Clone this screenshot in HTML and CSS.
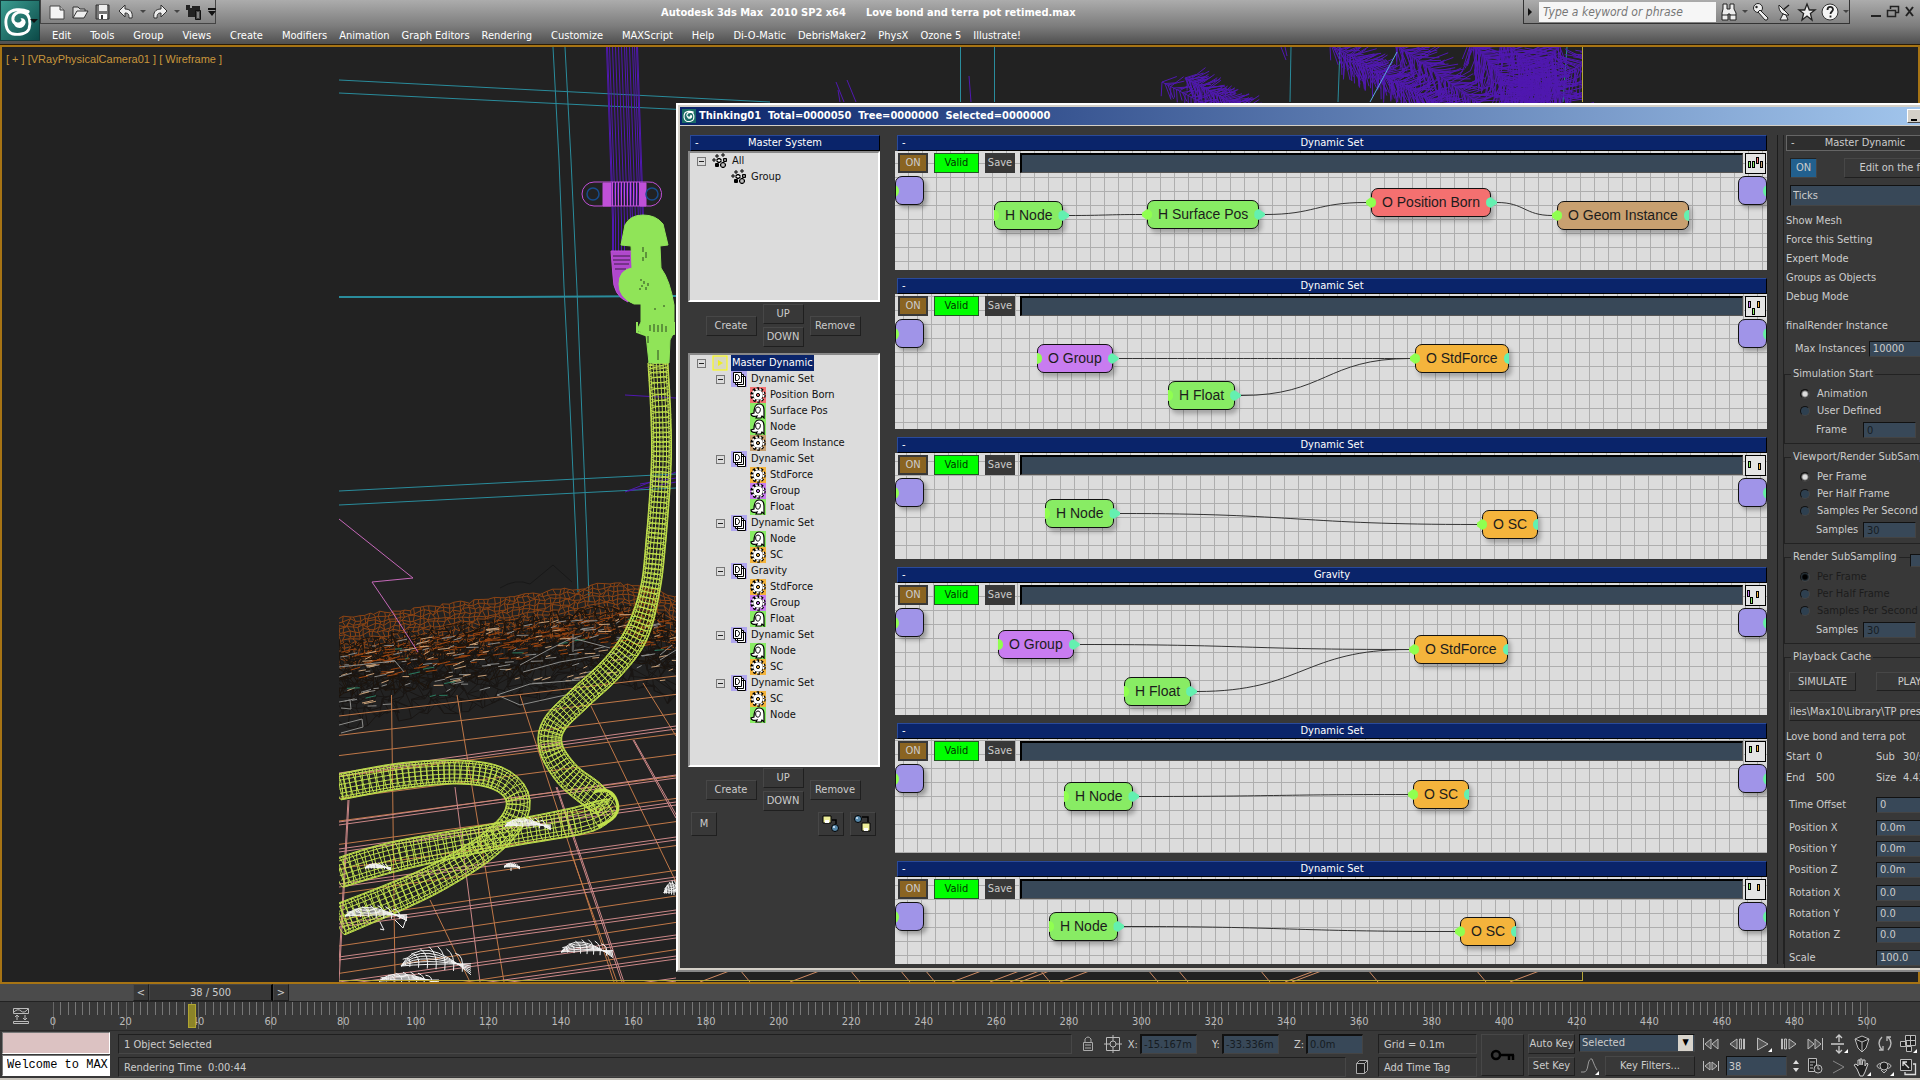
FILE: index.html
```html
<!DOCTYPE html>
<html lang="en">
<head>
    <meta charset="UTF-8">
    <meta name="viewport" content="width=device-width, initial-scale=1.0">
    <title>Autodesk 3ds Max 2010 SP2 x64</title>
    <link rel="stylesheet" href="styles.css">
</head>
<body>
    <!-- shared icons -->
    <svg class="defs" width="0" height="0">
        <symbol id="i-max" viewBox="0 0 40 40">
            <path d="M32 9C24 5 12 6 8 12c-4 7-3 20 5 23 8 2 18 0 20-6 2-7 1-17-6-19-8-2-14 3-13 9 1 5 8 6 11 2" fill="none" stroke="#fff" stroke-width="3.4" stroke-linecap="round"/>
            <path d="M15 20c-1 10 12 11 14 2 0-4-3-6-6-5 3 3 1 7-3 7-2 0-4-2-5-4z" fill="#fff"/>
        </symbol>
        <symbol id="i-particles" viewBox="0 0 16 16">
            <path d="M5 1v4M3 3h4M11 0v4M9 2h4M2 5v4M0 7h4" stroke="#000" fill="none"/>
            <path d="M7 5v5M4.500 7.500h5M13 5v4M11 7h4M11 9v6M8 12h6M5 10v4M3 12h4" stroke="#000" stroke-width="3" fill="none"/>
            <path d="M7 6v3M5.500 7.500h3M11 10v4M9 12h4M13 6v2" stroke="#fff" fill="none"/>
        </symbol>
        <symbol id="i-master" viewBox="0 0 16 16">
            <rect x="1" y="1" width="14" height="14" fill="#d8d8c0" stroke="#ff0"/>
            <path d="M6 5l5 3-5 3z" fill="#ee2"/>
        </symbol>
        <symbol id="i-set" viewBox="0 0 16 16">
            <rect width="16" height="16" fill="#b0a6ee"/>
            <path d="M6.500 5.500h8v10h-8zM4.500 3.500h8v10h-8z" fill="#fff" stroke="#000"/>
            <path d="M2.500 1.500h8v10h-8z" fill="#fff" stroke="#000"/>
            <path d="M4.500 3.500h2q2 1 2 3t-2 3h-2z" fill="none" stroke="#000"/>
        </symbol>
        <symbol id="i-gear" viewBox="0 0 16 16">
            <circle cx="8" cy="8" r="6.300" fill="none" stroke="#000" stroke-width="2.800" stroke-dasharray="2.400 1.550"/>
            <circle cx="8" cy="8" r="5.600" fill="#000"/>
            <circle cx="8" cy="8" r="5.700" fill="none" stroke="#fff" stroke-width="1.600" stroke-dasharray="2 1.980"/>
            <circle cx="8" cy="8" r="4.800" fill="#fff"/>
            <circle cx="8" cy="8" r="1.600" fill="currentColor" stroke="#000"/>
        </symbol>
        <symbol id="i-helper" viewBox="0 0 16 16">
            <path d="M4 10c0-4 1-9 5-9s5 3 5 6v8l-2-2-1 2H6l1-2c-3 1-6 0-6-2l3-1z" fill="#fff" stroke="#000" stroke-width="1.200"/>
            <path d="M6 9c-1-3 0-5 2-5s3 2 2 4c0 2-3 3-4 1z" fill="#fff" stroke="#000"/>
        </symbol>
        <symbol id="i-tostart" viewBox="0 0 18 16"><path d="M1.500 2v12" stroke="#bbb"/><path d="M9 3v10L3 8zM16 3v10l-6-5z" fill="#555" stroke="#bbb"/></symbol>
        <symbol id="i-prev" viewBox="0 0 18 16"><path d="M9 3v10L2 8zM11.500 3v10h2V3zM15.500 3v10h1V3z" fill="#555" stroke="#bbb"/></symbol>
        <symbol id="i-play" viewBox="0 0 18 16"><path d="M3.500 2v12L14 8z" fill="#555" stroke="#bbb"/><path d="M18 12v4h-4z" fill="#fff"/></symbol>
        <symbol id="i-next" viewBox="0 0 18 16"><path d="M9 3v10l7-5zM6.500 3v10h-2V3zM2.500 3v10h-1V3z" fill="#555" stroke="#bbb"/></symbol>
        <symbol id="i-toend" viewBox="0 0 18 16"><path d="M16.500 2v12" stroke="#bbb"/><path d="M9 3v10l6-5zM2 3v10l6-5z" fill="#555" stroke="#bbb"/></symbol>
        <symbol id="i-keymode" viewBox="0 0 18 16"><path d="M1.500 3v10M16.500 3v10" stroke="#bbb"/><path d="M8 4v8L3 8zM10 4v8l5-4z" fill="#555" stroke="#bbb"/></symbol>
    </svg>

    <header class="app-header">
        <button class="app-logo" aria-label="Application"><svg width="34" height="36"><use href="#i-max"/></svg><i class="caret"></i></button>
        <div class="header-rows">
            <div class="title-row">
                <div class="quick">
                    <svg width="18" height="18" viewBox="0 0 18 18"><path d="M2 3h10l4 4v9H2z" fill="#f4f4f4" stroke="#444"/><path d="M12 3v4h4" fill="#bbb" stroke="#444"/></svg>
                    <svg width="18" height="18" viewBox="0 0 18 18"><path d="M2 15V4h5l2 2h5v3" fill="#ddd" stroke="#333"/><path d="M2 15l4-7h11l-4 7z" fill="#eee" stroke="#333"/></svg>
                    <svg width="18" height="18" viewBox="0 0 18 18"><path d="M2 2h13v14H2z" fill="#777" stroke="#333"/><path d="M5 2h8v6H5z" fill="#eee"/><path d="M5 11h8v5H5z" fill="#fff"/><path d="M7 12h2v4H7z" fill="#333"/></svg>
                    <svg width="18" height="18" viewBox="0 0 18 18"><path d="M2 8l6-6v4c6 0 8 4 7 9h-3c0-4-1-5-4-5v4z" fill="#eee" stroke="#333"/></svg>
                    <i class="caret dim"></i>
                    <svg width="18" height="18" viewBox="0 0 18 18"><path d="M16 8l-6-6v4c-6 0-8 4-7 9h3c0-4 1-5 4-5v4z" fill="#eee" stroke="#333"/></svg>
                    <i class="caret dim"></i>
                    <svg width="18" height="18" viewBox="0 0 18 18"><path d="M1 2h4v3h2V3h8v6h-5v5H3V7H1z" fill="#222"/><path d="M10.500 7.500h5v9h-5z" fill="#444" stroke="#111"/><path d="M12 10h2M12 12h2M12 14h2" stroke="#bbb"/></svg>
                    <svg width="8" height="10" viewBox="0 0 8 10"><path d="M0 1h8v2H0zM0 4h8L4 9z" fill="#111"/></svg>
                </div>
                <div class="app-title"><span>Autodesk 3ds Max  2010 SP2 x64</span><span>Love bond and terra pot retimed.max</span></div>
                <div class="search">
                    <i class="arrow"></i>
                    <input type="text" placeholder="Type a keyword or phrase" aria-label="Search">
                    <svg width="20" height="20" viewBox="0 0 20 20"><path d="M4 2h4v5h3V2h4v5l2 4v7h-6v-6H9v6H3v-7l1-4z" fill="#eee" stroke="#222"/><path d="M3 13h6M11 13h6" stroke="#222"/></svg>
                    <i class="caret dim"></i>
                    <svg width="20" height="20" viewBox="0 0 20 20"><circle cx="7" cy="6" r="4.500" fill="#eee" stroke="#222"/><path d="M9 8l8 8-1 2-2 0-7-8z" fill="#eee" stroke="#222"/><circle cx="5.500" cy="5" r="1.200" fill="#222"/></svg>
                    <svg width="20" height="20" viewBox="0 0 20 20"><path d="M5 3c-1 6 4 11 10 10z" fill="#eee" stroke="#222"/><path d="M9 8l6-5" stroke="#222" stroke-width="1.500"/><path d="M9 12l-3 6h8l-2-5z" fill="#eee" stroke="#222"/></svg>
                    <svg width="20" height="20" viewBox="0 0 20 20"><path d="M10 2l2.300 6H18l-4.600 3.500L15 18l-5-4-5 4 1.600-6.500L2 8h5.700z" fill="#eee" stroke="#222" stroke-width="1.300"/></svg>
                    <svg width="20" height="20" viewBox="0 0 20 20"><circle cx="10" cy="10" r="8" fill="#f4f4f4" stroke="#333"/><path d="M7.500 8c0-4 5.500-4 5.500-.500 0 2-2.500 2-2.500 4.500M10.500 13.500v2" fill="none" stroke="#222" stroke-width="1.800"/></svg>
                    <i class="caret dim"></i>
                </div>
                <div class="win-buttons">
                    <svg width="14" height="14" viewBox="0 0 14 14"><path d="M2 11h10" stroke="#222" stroke-width="2"/></svg>
                    <svg width="14" height="14" viewBox="0 0 14 14"><path d="M4.500 4V1.500h8v6H10" fill="none" stroke="#222" stroke-width="1.500"/><path d="M1.500 5.500h8v6h-8z" fill="none" stroke="#222" stroke-width="1.500"/></svg>
                    <svg width="14" height="14" viewBox="0 0 14 14"><path d="M3 2l7 9M10 2l-7 9" stroke="#222" stroke-width="2"/></svg>
                </div>
            </div>
            <nav class="menu">
                <a href="#">Edit</a><a href="#">Tools</a><a href="#">Group</a><a href="#">Views</a><a href="#">Create</a>
                <a href="#" class="tight">Modifiers</a><a href="#" class="tight">Animation</a><a href="#" class="tight">Graph Editors</a>
                <a href="#">Rendering</a><a href="#">Customize</a><a href="#">MAXScript</a><a href="#">Help</a>
                <a href="#" class="tight">Di-O-Matic</a><a href="#" class="tight">DebrisMaker2</a><a href="#" class="tight">PhysX</a><a href="#" class="tight">Ozone 5</a><a href="#">Illustrate!</a>
            </nav>
        </div>
    </header>

    <main class="workspace">
        <section class="viewport">
            <svg id="wire" class="wire" width="1916" height="935" viewBox="2 47 1916 935"></svg>
            <div class="view-label">[ + ] [VRayPhysicalCamera01 ] [ Wireframe ]</div>
        </section>

        <section class="window">
            <div class="window-title">
                <span class="mini-logo"><svg width="14" height="14"><use href="#i-max"/></svg></span>
                <span>Thinking01  Total=0000050  Tree=0000000  Selected=0000000</span>
                <div class="sys">
                    <button aria-label="Minimize"><i class="dash"></i></button><button aria-label="Maximize"></button><button aria-label="Close"></button>
                </div>
            </div>
            <div class="window-body">
                <div class="side">
                    <h2 class="bar"><i>-</i>Master System</h2>
                    <div class="tree system" id="systemTree"></div>
                    <div class="tools">
                        <button>Create</button>
                        <div class="updown"><button>UP</button><button>DOWN</button></div>
                        <button>Remove</button>
                    </div>
                    <div class="tree dynamic" id="dynamicTree"></div>
                    <div class="tools">
                        <button>Create</button>
                        <div class="updown"><button>UP</button><button>DOWN</button></div>
                        <button>Remove</button>
                    </div>
                    <div class="io">
                        <button>M</button>
                        <span></span>
                        <button aria-label="Load"><svg width="18" height="18" viewBox="0 0 18 18"><path d="M1 1h8v7H1z" fill="#ee9" stroke="#000"/><path d="M3 5h4v3H3z" fill="#fff"/><path d="M10 5h4v4" fill="none" stroke="#000" stroke-width="1.500"/><circle cx="13" cy="13" r="3.500" fill="#58a" stroke="#000"/><circle cx="12" cy="12" r="1" fill="#def"/></svg></button>
                        <button aria-label="Save"><svg width="18" height="18" viewBox="0 0 18 18"><circle cx="4" cy="4" r="3.500" fill="#58a" stroke="#000"/><circle cx="3" cy="3" r="1" fill="#def"/><path d="M8 2h6v5" fill="none" stroke="#000" stroke-width="1.500"/><path d="M8 8h8v8H8z" fill="#ee9" stroke="#000"/><path d="M10 13h4v3h-4z" fill="#fff"/></svg></button>
                    </div>
                </div>

                <div class="sets" id="sets"></div>

                <form class="params">
                    <h2 class="rollout"><i>-</i>Master Dynamic</h2>
                    <div class="on-row"><button type="button" class="on">ON</button><button type="button" class="fly">Edit on the fly</button></div>
                    <select class="ticks" aria-label="Time unit"><option>Ticks</option></select>
                    <ul class="flags">
                        <li>Show Mesh</li><li>Force this Setting</li><li>Expert Mode</li><li>Groups as Objects</li><li>Debug Mode</li>
                    </ul>
                    <p class="final">finalRender Instance</p>
                    <div class="max-inst"><label for="maxInst">Max Instances</label><input id="maxInst" type="text" value="10000"></div>

                    <fieldset>
                        <legend>Simulation Start</legend>
                        <label class="opt"><input type="radio" name="start" checked>Animation</label>
                        <label class="opt"><input type="radio" name="start">User Defined</label>
                        <div class="num"><label for="frame">Frame</label><input id="frame" type="text" value="0" disabled></div>
                    </fieldset>
                    <fieldset>
                        <legend>Viewport/Render SubSampling</legend>
                        <label class="opt"><input type="radio" name="vsub" checked>Per Frame</label>
                        <label class="opt"><input type="radio" name="vsub">Per Half Frame</label>
                        <label class="opt"><input type="radio" name="vsub">Samples Per Second</label>
                        <div class="num"><label for="vsamples">Samples</label><input id="vsamples" type="text" value="30" disabled></div>
                    </fieldset>
                    <fieldset>
                        <legend>Render SubSampling</legend>
                        <input type="checkbox" class="legend-check" aria-label="Render SubSampling">
                        <label class="opt off"><input type="radio" name="rsub" checked disabled>Per Frame</label>
                        <label class="opt off"><input type="radio" name="rsub" disabled>Per Half Frame</label>
                        <label class="opt off"><input type="radio" name="rsub" disabled>Samples Per Second</label>
                        <div class="num"><label for="rsamples">Samples</label><input id="rsamples" type="text" value="30" disabled></div>
                    </fieldset>
                    <fieldset class="cache">
                        <legend>Playback Cache</legend>
                        <div class="pair"><button type="button">SIMULATE</button><button type="button">PLAY</button></div>
                        <button type="button" class="path">iles\Max10\Library\TP presets</button>
                        <p>Love bond and terra pot</p>
                        <div class="stats"><span>Start</span><span>0</span><span>Sub</span><span>30/s</span></div>
                        <div class="stats"><span>End</span><span>500</span><span>Size</span><span>4.42</span></div>
                        <div class="vals"><label for="toff">Time Offset</label><input id="toff" type="text" value="0"></div>
                        <div class="vals">
                            <label for="px">Position X</label><input id="px" type="text" value="0.0m">
                            <label for="py">Position Y</label><input id="py" type="text" value="0.0m">
                            <label for="pz">Position Z</label><input id="pz" type="text" value="0.0m">
                        </div>
                        <div class="vals">
                            <label for="rx">Rotation X</label><input id="rx" type="text" value="0.0">
                            <label for="ry">Rotation Y</label><input id="ry" type="text" value="0.0">
                            <label for="rz">Rotation Z</label><input id="rz" type="text" value="0.0">
                        </div>
                        <div class="vals"><label for="sc">Scale</label><input id="sc" type="text" value="100.0"></div>
                    </fieldset>
                </form>
            </div>
        </section>
    </main>

    <div class="time-slider">
        <button>&lt;</button><button class="thumb">38 / 500</button><button>&gt;</button>
    </div>
    <div class="track">
        <svg class="curve-icon" width="18" height="18" viewBox="0 0 18 18"><path d="M1.500 1.500h15v5h-15zM1.500 14.500h15v2h-15zM2 5q4-4 7-1t7-2M5 9v4M3 10l2-2 2 2M13 8v4M11 11l2 2 2-2" fill="none" stroke="#bbb"/></svg>
        <div class="ruler" id="ruler"></div>
    </div>

    <footer class="status">
        <div class="listener"><div class="macro"></div><input type="text" value="Welcome to MAX" aria-label="Listener"></div>
        <div class="prompts">
            <div class="line coords">
                <div class="prompt">1 Object Selected</div>
                <svg width="16" height="20" viewBox="0 0 16 20"><path d="M3.500 8.500h9v8h-9zM5 8V5q3-4 6 0v3M5 11h6M5 14h6" fill="none" stroke="#aaa"/></svg>
                <svg width="18" height="18" viewBox="0 0 18 18"><path d="M2.500 2.500h13v13h-13z" fill="none" stroke="#bbb"/><circle cx="9" cy="9" r="3" fill="none" stroke="#bbb"/><path d="M9 0v6M9 12v6M0 9h6M12 9h6" stroke="#bbb"/></svg>
                <label class="xyz">X:<input type="text" value="-15.167m" disabled></label>
                <label class="xyz">Y:<input type="text" value="-33.336m" disabled></label>
                <label class="xyz">Z:<input type="text" value="0.0m" disabled></label>
            </div>
            <div class="line">
                <div class="prompt">Rendering Time  0:00:44</div>
                <svg width="16" height="18" viewBox="0 0 16 18"><path d="M2.500 5.500l3-3h8v10l-3 3h-8z" fill="#222" stroke="#aaa"/><path d="M2.500 5.500h8v10M10.500 5.500l3-3" fill="none" stroke="#aaa"/></svg>
            </div>
        </div>
        <div class="stack grid-box"><div class="prompt">Grid = 0.1m</div><div class="prompt">Add Time Tag</div></div>
        <button class="key" aria-label="Set Keys"><svg width="26" height="14" viewBox="0 0 26 14"><circle cx="6" cy="7" r="4" fill="none" stroke="#000" stroke-width="2.500"/><path d="M10 7h14M19 7v5M23 7v5" stroke="#000" stroke-width="2.500"/></svg></button>
        <div class="stack auto"><button>Auto Key</button><button>Set Key</button></div>
        <div class="stack filters">
            <span class="selbox"><select aria-label="Key set"><option>Selected</option></select></span>
            <div class="line"><svg width="22" height="20" viewBox="0 0 22 20"><path d="M2 16h3q3 0 4-7t4-6q3 8 5 11" fill="none" stroke="#999"/><path d="M20 15v4h-4z" fill="#fff"/></svg><button>Key Filters...</button></div>
        </div>
        <div class="stack play">
            <div class="line icons">
                <svg width="18" height="16"><use href="#i-tostart"/></svg><svg width="18" height="16"><use href="#i-prev"/></svg><svg width="18" height="16"><use href="#i-play"/></svg><svg width="18" height="16"><use href="#i-next"/></svg><svg width="18" height="16"><use href="#i-toend"/></svg>
            </div>
            <div class="line icons">
                <svg width="18" height="16"><use href="#i-keymode"/></svg>
                <input type="text" value="38" aria-label="Current frame">
                <svg width="8" height="18" viewBox="0 0 8 18"><path d="M1 7l3-4 3 4zM1 11l3 4 3-4z" fill="#ddd"/></svg>
                <svg width="18" height="18" viewBox="0 0 18 18"><path d="M2.500 1.500h8v13h-8z" fill="#222" stroke="#bbb"/><path d="M4 5h5M4 8h3M4 11h3" stroke="#bbb"/><circle cx="12" cy="12" r="4" fill="#333" stroke="#bbb"/><path d="M12 9v3h2" fill="none" stroke="#bbb"/></svg>
            </div>
        </div>
        <div class="nav-icons">
            <svg viewBox="0 0 18 20"><path d="M9 1v7M6 4l3-3 3 3M9 12v7M6 16l3 3 3-3M1 10h13" fill="none" stroke="#ccc" stroke-width="1.300"/><path d="M18 15v4h-4z" fill="#fff"/></svg>
            <svg viewBox="0 0 18 20"><path d="M2 5l7-3 7 3-3 9-4 4-4-4z" fill="#222" stroke="#bbb"/><path d="M2 5l7 3 7-3M9 8v9" fill="none" stroke="#bbb"/></svg>
            <svg viewBox="0 0 18 20"><path d="M6 3q-6 6 0 13M12 3q6 6 0 13M3 16h4v-4M15 3h-4v4" fill="none" stroke="#bbb" stroke-width="1.300"/></svg>
            <svg viewBox="0 0 18 20"><path d="M6.500 1.500h10v10h-10zM1.500 7.500h6v5h-6zM7.500 12.500h5v5h-5z" fill="#222" stroke="#bbb"/><path d="M11.500 2v9M7 6.500h9" stroke="#bbb"/><path d="M18 15v4h-4z" fill="#fff"/></svg>
            <svg viewBox="0 0 18 20"><path d="M3 4l11 6-11 6" fill="none" stroke="#888"/></svg>
            <svg viewBox="0 0 18 20"><path d="M4 12L1 8l2-1 2 2V3h2v5-6h2v6l1-5h2v6l2-3 1 1-3 8-2 4H7z" fill="#222" stroke="#ccc"/><path d="M18 15v4h-4z" fill="#fff"/></svg>
            <svg viewBox="0 0 18 20"><ellipse cx="8" cy="9" rx="7" ry="3" fill="none" stroke="#bbb"/><circle cx="8" cy="9" r="4" fill="#222" stroke="#bbb"/><path d="M5 13l3 3 3-3" fill="none" stroke="#bbb"/><path d="M18 15v4h-4z" fill="#fff"/></svg>
            <svg viewBox="0 0 18 20"><path d="M1.500 2.500h11v11h-11z" fill="#222" stroke="#bbb"/><path d="M4 5l6 6M4 9V5h4M14 7h2.500v10.500H6V15" fill="none" stroke="#ddd" stroke-width="1.300"/></svg>
        </div>
    </footer>

    <script src="app.js"></script>
</body>
</html>
```

FILE: styles.css
```css
* {
    box-sizing: border-box;
}

body {
    margin: 0;
    height: 100vh;
    display: flex;
    flex-direction: column;
    overflow: hidden;
    background: #383838;
    color: #ccc;
    font: 11px/14px "DejaVu Sans Condensed", Tahoma, "DejaVu Sans", sans-serif;
}

button, input, select {
    font: inherit;
    color: inherit;
    margin: 0;
    padding: 0;
    border-radius: 0;
}

button {
    background: #383838;
    border: 1px solid;
    border-color: #474747 #1f1f1f #1f1f1f #474747;
    white-space: nowrap;
}

input, select {
    background: #384858;
    border: 1px solid;
    border-color: #111 #444 #444 #111;
    appearance: none;
    min-width: 0;
}

input:disabled {
    color: #161c22;
}

h2, p, ul, fieldset {
    margin: 0;
    padding: 0;
    font-size: 11px;
    font-weight: normal;
}

svg {
    flex: none;
    display: block;
}

.defs {
    position: absolute;
}

/* header */
.app-header {
    display: flex;
    flex: none;
    height: 45px;
    background: linear-gradient(#acacac, #7c7c7c 60%, #4f4f4f);
    border-bottom: 1px solid #2a1c08;
}

.app-logo {
    display: flex;
    align-items: center;
    width: 40px;
    height: 41px;
    background: linear-gradient(135deg, #3a9c90, #0c4a48);
    border: 1px solid #143c3c;
    color: #000;
}

.app-logo svg {
    margin-right: -5px;
}

.caret {
    flex: none;
    border: 4px solid transparent;
    border-top-color: #111;
    border-bottom: 0;
}

.caret.dim {
    border-width: 3px;
    border-top-color: #444;
    border-bottom: 0;
}

.header-rows {
    flex: 1;
}

.title-row {
    display: flex;
    justify-content: space-between;
    height: 24px;
}

.quick {
    display: flex;
    align-items: center;
    gap: 5px;
    width: 176px;
    padding-left: 7px;
    border: 1px solid #444;
    border-top: 0;
}

.app-title {
    flex: 1;
    display: flex;
    gap: 20px;
    padding-left: 445px;
    color: #fff;
    font-weight: bold;
    line-height: 25px;
    white-space: pre;
}

.search {
    display: flex;
    align-items: center;
    gap: 3px;
    width: 327px;
    padding-left: 4px;
    border: 1px solid #333;
    border-top: 0;
}

.search input {
    width: 179px;
    height: 20px;
    margin-left: 4px;
    padding-left: 4px;
    background: #f6f6f6;
    border: 0;
    font-size: 12px;
}

.search input::placeholder {
    color: #777;
    font-style: italic;
}

.arrow {
    border: 4px solid transparent;
    border-left-color: #111;
    border-right: 0;
}

.win-buttons {
    display: flex;
    align-items: center;
    gap: 3px;
    padding: 0 3px 0 19px;
}

.menu {
    display: flex;
    height: 20px;
    padding-left: 12px;
    line-height: 23px;
}

.menu a {
    margin-right: 19px;
    color: #fff;
    text-decoration: none;
    white-space: nowrap;
}

.menu .tight {
    margin-right: 12px;
}

/* viewport */
.workspace {
    position: relative;
    flex: 1;
    min-height: 0;
    overflow: hidden;
}

.viewport {
    position: absolute;
    inset: 0;
    overflow: hidden;
    background: #222;
    border: 2px solid #a77414;
}

.wire {
    position: absolute;
    top: 0;
    left: 0;
}

.view-label {
    position: absolute;
    top: 5px;
    left: 4px;
    color: #c8963c;
    font-family: "Liberation Sans", Arial, sans-serif;
}

/* Thinking window, runs off the right edge of the screen */
.window {
    position: absolute;
    top: 58px;
    right: -44px;
    bottom: 12px;
    left: 676px;
    display: flex;
    flex-direction: column;
    padding: 2px;
    background: #d4d0c8;
    border: 2px solid;
    border-color: #fff #888 #888 #fff;
}

.window-title {
    display: flex;
    align-items: center;
    gap: 3px;
    height: 18px;
    flex: none;
    padding: 0 2px;
    background: linear-gradient(90deg, #0a246a, #a6caf0);
    color: #fff;
    font-weight: bold;
    white-space: pre;
}

.mini-logo {
    background: #1a6c66;
}

.sys {
    display: flex;
    margin-left: auto;
}

.sys button {
    width: 17px;
    height: 14px;
    background: #d4d0c8;
    border-color: #fff #444 #444 #fff;
}

.dash {
    display: block;
    width: 6px;
    height: 2px;
    margin: 7px 0 0 3px;
    background: #000;
}

.window-body {
    flex: 1;
    min-height: 0;
    display: flex;
    margin-top: 1px;
    padding: 9px 8px 4px;
    background: #383838;
    overflow: hidden;
}

.bar, .rollout {
    position: relative;
    height: 16px;
    background: #0a246a;
    border: 1px solid;
    border-color: #2a4a9a #000 #000 #2a4a9a;
    color: #fff;
    text-align: center;
}

.bar {
    margin-left: 2px;
}

.bar i, .rollout i {
    position: absolute;
    left: 4px;
    font-style: normal;
}

.side {
    width: 192px;
    flex: none;
    margin-right: 15px;
}

.tree {
    background: #dcdcdc;
    border: 2px solid;
    border-color: #888 #fff #fff #888;
    color: #111;
}

.tree.system {
    height: 151px;
}

.tree.dynamic {
    height: 414px;
}

.tree ul {
    list-style: none;
    padding-left: 19px;
}

.tree > ul {
    padding-left: 7px;
}

.tree .row {
    display: flex;
    align-items: center;
    height: 16px;
}

.tree .box {
    width: 9px;
    height: 9px;
    margin-right: 6px;
    border: 1px solid #777;
    background: linear-gradient(#222, #222) center / 5px 1px no-repeat;
}

.tree .box.none {
    visibility: hidden;
}

.tree .icon {
    width: 16px;
    height: 16px;
    margin-right: 3px;
}

.tree .row span {
    padding: 0 1px;
}

.tree .selected span {
    background: #0a246a;
    color: #fff;
    line-height: 16px;
}

.c-green { background: #88ec64; color: #88ec64; }
.c-red { background: #f47070; color: #f47070; }
.c-tan { background: #c8a070; color: #c8a070; }
.c-orange { background: #f4b43c; color: #f4b43c; }
.c-purple { background: #c87cf0; color: #c87cf0; }

.tools {
    display: flex;
    justify-content: center;
    align-items: center;
    gap: 6px;
    padding: 2px 2px 6px 0;
}

.tools button {
    width: 51px;
    height: 20px;
}

.updown {
    display: flex;
    flex-direction: column;
    gap: 3px;
}

.tools .updown button {
    width: 41px;
}

.dynamic + .tools {
    padding: 1px 2px 1px 0;
}

.io {
    display: flex;
    gap: 6px;
    padding: 0 4px 0 3px;
}

.io span {
    flex: 1;
}

.io button {
    display: grid;
    place-items: center;
    width: 26px;
    height: 24px;
}

/* dynamic sets */
.sets {
    flex: 1;
    min-width: 0;
    display: flex;
    flex-direction: column;
    gap: 8px;
}

.canvas {
    position: relative;
    overflow: hidden;
    background-color: #dcdcdc;
    background-image: linear-gradient(90deg, #aeaeae 1px, transparent 1px), linear-gradient(#aeaeae 1px, transparent 1px);
    background-size: 14px 14px;
}

.strip {
    display: flex;
    height: 23px;
    padding: 2px 1px 0 3px;
}

.strip button {
    height: 20px;
}

.strip .on-btn {
    width: 30px;
    margin-right: 6px;
    background: #8a6422;
    border: 2px solid #383838;
    line-height: 16px;
}

.strip .valid {
    width: 45px;
    margin-right: 6px;
    background: #0f0;
    border-color: #252;
    color: #030;
}

.strip .save {
    width: 30px;
    margin-right: 5px;
    border: 0;
}

.strip input {
    flex: 1;
    height: 20px;
    border-width: 2px 1px 1px 2px;
    border-color: #000 #555 #555 #000;
}

.thumbmap {
    margin-left: 2px;
    border: 1px solid #000;
    background: #e4e4e4;
}

.inlet, .outlet {
    position: absolute;
    top: 25px;
    width: 29px;
    height: 29px;
    background: #a094e8;
    border: 1px solid #111;
    border-radius: 7px;
    box-shadow: 3px 3px 4px rgba(0, 0, 0, 0.3);
    overflow: hidden;
}

.inlet {
    left: 0;
}

.outlet {
    right: 0;
}

.inlet::before, .outlet::before {
    content: "";
    position: absolute;
    top: 8px;
    left: -7px;
    width: 10px;
    height: 12px;
    border-radius: 50%;
    background: #90ff50;
}

.outlet::before {
    left: auto;
    right: -7px;
    background: #64f0a0;
}

.wires {
    position: absolute;
    top: 0;
    left: 0;
    width: 100%;
    height: 100%;
    fill: none;
    stroke: #333;
    pointer-events: none;
}

.node {
    position: absolute;
    height: 29px;
    padding: 0 10px;
    border: 1px solid #111;
    border-radius: 7px;
    box-shadow: 3px 4px 4px rgba(0, 0, 0, 0.25);
    white-space: nowrap;
    font: 14px/26px "Liberation Sans", Arial, sans-serif;
}

.node b {
    color: #1c1c1c;
    font-weight: normal;
}

.port {
    position: absolute;
    top: 8px;
    width: 5px;
    height: 11px;
}

.port.in {
    left: -1px;
    background: #90ff50;
    border-radius: 0 5px 5px 0;
}

.port.out {
    right: -1px;
    background: #64f0b0;
    border-radius: 5px 0 0 5px;
}

.port.in.linked {
    left: -6px;
    width: 10px;
    clip-path: polygon(0 35%, 50% 0, 100% 20%, 100% 80%, 50% 100%, 0 65%);
}

.port.out.linked {
    right: -7px;
    width: 11px;
    clip-path: polygon(0 20%, 40% 0, 100% 40%, 100% 60%, 40% 100%, 0 80%);
}

/* master dynamic rollout */
.params {
    flex: none;
    width: 175px;
    margin-left: 10px;
    padding: 0 8px;
    border-left: 1px solid #1c1c1c;
    box-shadow: inset 5px 0 0 #383838, inset 6px 0 0 #222;
    white-space: nowrap;
}

.rollout {
    background: #2e2e2e;
    border-color: #666;
    color: #ccc;
}

.on-row {
    display: flex;
    gap: 27px;
    margin: 7px 0 7px 4px;
}

.on-row button {
    height: 20px;
}

.on-row .on {
    width: 27px;
    background: #22608e;
    border-color: #222 #444 #444 #222;
}

.on-row .fly {
    flex: 1;
}

.ticks {
    display: block;
    width: 154px;
    height: 21px;
    margin-left: 4px;
    padding-left: 2px;
}

.flags {
    margin-top: 5px;
    list-style: none;
    line-height: 19px;
}

.final {
    margin-top: 10px;
    line-height: 19px;
}

.max-inst {
    display: flex;
    align-items: center;
    gap: 3px;
    height: 19px;
    margin: 4px 0 0 9px;
}

.max-inst input {
    width: 54px;
    height: 16px;
    padding-left: 3px;
}

fieldset {
    min-width: 0;
    margin: 6px 0 0 -2px;
    padding: 4px 0 4px 14px;
    border: 1px solid #222;
}

.max-inst + fieldset {
    margin-top: 9px;
}

legend {
    margin-left: -8px;
    padding: 0 2px;
    height: 14px;
}

.opt {
    display: flex;
    align-items: center;
    gap: 6px;
    height: 17px;
}

.opt input {
    width: 10px;
    height: 10px;
    border-radius: 50%;
    margin: 0 1px;
    background: #2e4050;
}

.opt input:checked {
    background: radial-gradient(#ddd 0 2px, #2c2c2c 4px);
}

.opt.off {
    color: #1c1c1c;
}

.opt.off input:checked {
    background: radial-gradient(#000 0 2px, #2c3a44 4px);
}

.num {
    display: flex;
    align-items: center;
    height: 18px;
    margin: 2px 0 0 17px;
}

.num label {
    width: 47px;
}

.num input {
    width: 53px;
    height: 16px;
    padding-left: 3px;
}

.legend-check {
    float: right;
    width: 13px;
    height: 13px;
    margin: -14px 20px 0 0;
}

.cache {
    padding: 8px 0 0 4px;
}

.cache legend {
    margin-left: 2px;
}

.cache button {
    height: 19px;
}

.pair {
    display: flex;
    gap: 20px;
}

.pair button {
    flex: 1;
}

.cache .path {
    width: 100%;
    margin-top: 11px;
    overflow: hidden;
    text-align: left;
}

.cache p {
    margin: 6px 0 0 -3px;
    line-height: 19px;
}

.stats {
    display: grid;
    grid-template-columns: 30px 60px 27px 1fr;
    margin-left: -3px;
    line-height: 21px;
}

.vals {
    display: grid;
    grid-template-columns: 87px 1fr;
    grid-auto-rows: 21px;
    align-items: center;
    margin-top: 2px;
}

.stats + .vals {
    margin-top: 6px;
}

.vals input {
    height: 16px;
    padding-left: 3px;
}

/* time */
.time-slider {
    display: flex;
    flex: none;
    height: 18px;
    padding-left: 133px;
    background: #4b4b4b;
    border-bottom: 1px solid #222;
}

.time-slider button {
    width: 16px;
    line-height: 14px;
}

.time-slider .thumb {
    width: 124px;
    border-right: 2px solid #000;
}

.track {
    flex: none;
    display: flex;
    height: 28px;
}

.curve-icon {
    margin: 5px 23px 0 12px;
}

.ruler {
    position: relative;
    flex: 1;
    margin-right: 53px;
}

.tick {
    position: absolute;
    top: 0;
    width: 1px;
    height: 13px;
    background: #777;
}

.tick.major {
    height: 27px;
    background: #666;
}

.tick.major span {
    position: absolute;
    top: 13px;
    left: 0;
    transform: translateX(-50%);
    color: #bbb;
}

.marker {
    position: absolute;
    top: 2px;
    width: 8px;
    height: 24px;
    margin-left: -3px;
    background: #8c8428;
    border: 1px solid #b0a430;
}

/* status bar */
.status {
    flex: none;
    display: flex;
    height: 50px;
    padding: 3px 3px 4px 2px;
    border-top: 1px solid #2a2a2a;
    box-shadow: inset 0 -2px 0 #c8c4bc;
    white-space: pre;
}

.listener {
    display: flex;
    flex-direction: column;
    gap: 1px;
    width: 108px;
    margin: -2px 8px 0 0;
}

.listener .macro, .listener input {
    height: 22px;
    border: 1px solid;
    border-color: #777 #fff #fff #777;
    background: #dcc2c2;
}

.listener input {
    width: 100%;
    padding-left: 4px;
    background: #fff;
    color: #000;
    font: 12px "Liberation Mono", "Courier New", monospace;
}

.prompts, .stack {
    display: flex;
    flex-direction: column;
    gap: 3px;
}

.prompts {
    flex: 1;
    margin-right: 8px;
}

.line {
    display: flex;
    align-items: center;
    height: 20px;
}

.coords {
    padding-right: 7px;
}

.prompt {
    flex: 1;
    height: 20px;
    padding-left: 5px;
    border: 1px solid;
    border-color: #1f1f1f #474747 #474747 #1f1f1f;
    line-height: 19px;
}

.prompts svg {
    margin: 0 0 0 8px;
}

.xyz {
    margin-left: 15px;
}

svg + .xyz {
    margin-left: 6px;
}

.xyz input {
    width: 57px;
    height: 20px;
    margin-left: 2px;
    padding-left: 2px;
    border-width: 2px 1px 1px 2px;
}

.grid-box {
    width: 99px;
    margin-right: 4px;
}

.grid-box .prompt {
    flex: none;
}

.key {
    display: grid;
    place-items: center;
    width: 43px;
    margin-right: 4px;
}

.auto {
    width: 47px;
    margin-right: 4px;
}

.auto button, .filters button {
    height: 20px;
}

.filters {
    width: 116px;
    margin-right: 7px;
}

.selbox {
    position: relative;
    height: 20px;
}

.selbox select {
    width: 100%;
    height: 18px;
    padding-left: 2px;
}

.selbox::after {
    content: "▼";
    position: absolute;
    top: 1px;
    right: 2px;
    width: 15px;
    height: 16px;
    background: #d8d4cc;
    color: #000;
    text-align: center;
    font-size: 9px;
    pointer-events: none;
}

.filters button {
    flex: 1;
    margin-left: 4px;
}

.play {
    width: 122px;
    margin-right: 6px;
}

.icons {
    justify-content: space-between;
}

.icons input {
    width: 61px;
    height: 20px;
    padding-left: 2px;
}

.nav-icons {
    display: grid;
    grid-template-columns: repeat(4, 18px);
    gap: 3px 5px;
}

.nav-icons svg {
    width: 18px;
    height: 20px;
}
```

FILE: app.js
```js
// ---------- trees ----------
const colors = { 'Position Born': 'red', 'Geom Instance': 'tan', 'Group': 'purple' };

function colorOf(kind, name) {
    return kind === 'H' ? 'green' : (colors[name] || 'orange');
}

function row(icon, text, hasBox, cls, color) {
    return `<div class="row ${cls || ''}"><i class="box ${hasBox ? '' : 'none'}"></i>` +
        `<svg class="icon ${color ? 'c-' + color : ''}"><use href="#i-${icon}"/></svg><span>${text}</span></div>`;
}

document.getElementById('systemTree').innerHTML =
    `<ul><li>${row('particles', 'All', true)}<ul><li>${row('particles', 'Group', false)}</li></ul></li></ul>`;

const treeData = [
    ['Dynamic Set', ['O Position Born', 'H Surface Pos', 'H Node', 'O Geom Instance']],
    ['Dynamic Set', ['O StdForce', 'O Group', 'H Float']],
    ['Dynamic Set', ['H Node', 'O SC']],
    ['Gravity', ['O StdForce', 'O Group', 'H Float']],
    ['Dynamic Set', ['H Node', 'O SC']],
    ['Dynamic Set', ['O SC', 'H Node']]
];

document.getElementById('dynamicTree').innerHTML = '<ul><li>' + row('master', 'Master Dynamic', true, 'selected') + '<ul>' +
    treeData.map(([name, kids]) => '<li>' + row('set', name, true) + '<ul>' + kids.map(k => {
        const kind = k[0], label = k.slice(2);
        return '<li>' + row(kind === 'H' ? 'helper' : 'gear', label, false, '', colorOf(kind, label)) + '</li>';
    }).join('') + '</ul></li>').join('') + '</ul></li></ul>';

// ---------- dynamic sets ----------
// nodes: [label, x, y], links: [from, to], grid: scroll offset of the canvas
const sets = [
    { name: 'Dynamic Set', height: 119, grid: [13, 12],
      nodes: [['H Node', 99, 50], ['H Surface Pos', 252, 49], ['O Position Born', 476, 37], ['O Geom Instance', 662, 50]],
      links: [[0, 1], [1, 2], [2, 3]], map: [[3, 7, 'green'], [7, 7, 'green'], [11, 3, 'red'], [15, 7, 'tan']] },
    { name: 'Dynamic Set', height: 135, grid: [8, 2],
      nodes: [['O Group', 142, 50], ['H Float', 273, 87], ['O StdForce', 520, 50]],
      links: [[0, 2], [1, 2]], map: [[3, 4, 'purple'], [7, 11, 'green'], [12, 4, 'orange']] },
    { name: 'Dynamic Set', height: 106, grid: [11, 8],
      nodes: [['H Node', 150, 46], ['O SC', 587, 57]], links: [[0, 1]], map: [[3, 5, 'green'], [13, 7, 'orange']] },
    { name: 'Gravity', height: 132, grid: [10, 13],
      nodes: [['O Group', 103, 47], ['H Float', 229, 94], ['O StdForce', 519, 52]],
      links: [[0, 2], [1, 2]], map: [[2, 4, 'purple'], [5, 11, 'green'], [11, 5, 'orange']] },
    { name: 'Dynamic Set', height: 114, grid: [8, 1],
      nodes: [['H Node', 169, 43], ['O SC', 518, 41]], links: [[0, 1]], map: [[4, 4, 'green'], [11, 3, 'orange']] },
    { name: 'Dynamic Set', height: 87, grid: [12, 8],
      nodes: [['H Node', 154, 35], ['O SC', 565, 40]], links: [[0, 1]], map: [[3, 3, 'green'], [12, 4, 'orange']] }
];

const fills = { green: '#88ec64', red: '#f47070', tan: '#c8a070', orange: '#f4b43c', purple: '#c87cf0' };

sets.forEach(set => {
    const panel = document.createElement('section');
    panel.innerHTML = `<h2 class="bar"><i>-</i>${set.name}</h2>
        <div class="canvas" style="height:${set.height}px;background-position:${set.grid[0]}px ${set.grid[1]}px">
            <svg class="wires"></svg>
            <div class="strip">
                <button class="on-btn">ON</button><button class="valid">Valid</button><button class="save">Save</button>
                <input type="text" aria-label="Condition">
                <svg class="thumbmap" width="21" height="21">${set.map.map(m =>
                    `<rect x="${m[0] - 0.5}" y="${m[1] + 0.5}" width="2" height="6" fill="${fills[m[2]]}" stroke="#000"/>`).join('')}</svg>
            </div>
            <div class="inlet"></div><div class="outlet"></div>
        </div>`;
    document.getElementById('sets').appendChild(panel);

    const canvas = panel.querySelector('.canvas');
    const els = set.nodes.map(([label, x, y], i) => {
        const el = document.createElement('div');
        el.className = 'node c-' + colorOf(label[0], label.slice(2));
        el.style.left = x + 'px';
        el.style.top = y + 'px';
        const linkedIn = set.links.some(l => l[1] === i) ? ' linked' : '';
        const linkedOut = set.links.some(l => l[0] === i) ? ' linked' : '';
        el.innerHTML = `<b>${label}</b><i class="port in${linkedIn}"></i><i class="port out${linkedOut}"></i>`;
        canvas.appendChild(el);
        return el;
    });

    panel.querySelector('.wires').innerHTML = set.links.map(([a, b]) => {
        const x1 = els[a].offsetLeft + els[a].offsetWidth + 6, y1 = els[a].offsetTop + 14.5;
        const x2 = els[b].offsetLeft - 5, y2 = els[b].offsetTop + 14.5;
        const dx = (x2 - x1) / 2;
        return `<path d="M${x1} ${y1}C${x1 + dx} ${y1} ${x2 - dx} ${y2} ${x2} ${y2}"/>`;
    }).join('');
});

// ---------- ruler ----------
let ticks = '';
for (let f = 0; f <= 500; f += 2) {
    const major = f % 20 === 0;
    ticks += `<div class="tick ${major ? 'major' : ''}" style="left:${f / 5}%">${major ? `<span>${f}</span>` : ''}</div>`;
}
document.getElementById('ruler').innerHTML = ticks + '<div class="marker" style="left:7.6%"></div>';

// ---------- wireframe scene ----------
let seed = 7;
function rnd() {
    seed = (seed * 16807) % 2147483647;
    return seed / 2147483647;
}

const wire = document.getElementById('wire');
let out = '';

function path(d, stroke, width = 1, fill = 'none') {
    out += `<path d="${d}" stroke="${stroke}" stroke-width="${width}" fill="${fill}"/>`;
}

function poly(pts) {
    return 'M' + pts.map(p => p[0].toFixed(1) + ' ' + p[1].toFixed(1)).join('L');
}

// Catmull-Rom through [x, y, r]
function sample(pts, step) {
    const res = [];
    for (let i = 0; i < pts.length - 1; i++) {
        const p0 = pts[Math.max(0, i - 1)], p1 = pts[i], p2 = pts[i + 1], p3 = pts[Math.min(pts.length - 1, i + 2)];
        const n = Math.max(2, Math.round(Math.hypot(p2[0] - p1[0], p2[1] - p1[1]) / step));
        for (let k = 0; k < n; k++) {
            const t = k / n;
            res.push([0, 1, 2].map(c => 0.5 * (2 * p1[c] + (p2[c] - p0[c]) * t +
                (2 * p0[c] - 5 * p1[c] + 4 * p2[c] - p3[c]) * t * t +
                (3 * p1[c] - p0[c] - 3 * p2[c] + p3[c]) * t * t * t)));
        }
    }
    res.push(pts[pts.length - 1]);
    return res;
}

function tube(pts, color, step, sides) {
    const s = sample(pts, step);
    const normals = s.map((p, i) => {
        const a = s[Math.max(0, i - 1)], b = s[Math.min(s.length - 1, i + 1)];
        const l = Math.hypot(b[0] - a[0], b[1] - a[1]) || 1;
        return [-(b[1] - a[1]) / l, (b[0] - a[0]) / l];
    });
    let d = '';
    for (let j = 0; j <= sides; j++) {
        const o = Math.cos(Math.PI * j / sides);
        d += poly(s.map((p, i) => [p[0] + normals[i][0] * p[2] * o, p[1] + normals[i][1] * p[2] * o]));
    }
    s.forEach((p, i) => {
        const n = normals[i], ring = [];
        for (let j = 0; j <= 12; j++) {
            const a = Math.PI * 2 * j / 12;
            ring.push([p[0] + n[0] * p[2] * Math.cos(a) + n[1] * 3 * Math.sin(a),
                       p[1] + n[1] * p[2] * Math.cos(a) - n[0] * 3 * Math.sin(a)]);
        }
        d += poly(ring);
    });
    path(d, color);
}

// guide lines
const cyan = '#2a8c9c';
path('M339 80L770 102M339 93L690 110M553 47L559 160 564 287 570 407 576 540 578 592M565 47L571 160 577 290 582 417 587 540 589 602M339 491L676 474M339 505L676 488M960.500 47V102M994.500 47V102M1291 47L1290 102M1340 47L1338 102M1567 47L1563 102', cyan);
path('M339 297L510 297 676 296', cyan, 2);

// terrain
const ridge = x => 618 - 34 * Math.min(1, (x - 339) / 270) + (x > 640 ? (x - 640) * 0.35 : 0);
function terrain(y0, y1, rows, dx, color, jitter) {
    const grid = [];
    for (let r = 0; r <= rows; r++) {
        const line = [];
        for (let x = 339; x <= 680; x += dx) {
            line.push([x + (rnd() - 0.5) * jitter, ridge(x) + y0 + (y1 - y0) * r / rows + (rnd() - 0.5) * jitter]);
        }
        grid.push(line);
    }
    let d = grid.map(poly).join('');
    for (let c = 0; c < grid[0].length; c++) d += poly(grid.map(l => l[c]));
    path(d, color);
}
terrain(0, 50, 13, 5, '#8c4414', 4);
terrain(26, 78, 13, 5, '#1c130b', 12);
terrain(42, 105, 10, 8, '#191614', 16);
path('M500 588Q516 578 530 584M530 584L553 565 572 582', '#181818');
const specks = { '#9a4410': '', '#8a8a88': '', '#c8a078': '', '#2a7c60': '' };
Object.keys(specks).forEach((color, n) => {
    for (let i = 0; i < [170, 90, 80, 14][n]; i++) {
        const x = 339 + rnd() * 335, y = ridge(x) + 30 + rnd() * (n === 0 ? 35 : 62);
        specks[color] += `M${x.toFixed(1)} ${y.toFixed(1)}l${(3 + rnd() * 10).toFixed(1)} ${(-rnd() * 3).toFixed(1)}`;
    }
    path(specks[color], color);
});
path('M339 667L395 661 404 672M339 677L352 673M520 665L548 650 572 638 610 648M523 672L560 662 600 655M497 695L530 684 580 680M497 695L520 705 570 694M339 702L350 700 351 709 341 708M339 725L362 719 363 727 341 733M573 634V652M660 655L672 645M660 660L676 650', '#8c8c8a');

// floor grid
let orange = '', pink = '';
for (let i = 0; i < 13; i++) {
    const y = 716 + i * 19 + i * i * 0.4;
    orange += `M339 ${y}L676 ${y - 40 - i}`;
}
[773, 822, 849, 884, 924, 957, 982, 1003, 1025].forEach(y => {
    pink += `M339 ${y}L676 ${y - 47}M339 ${y + 3}L676 ${y - 44}`;
});
orange += 'M391.500 695L395 982M457 695L504 982M520 695L614 982M591 706L676 882M643 683L676 736M430 900L470 982M570 850L617 982';
pink += 'M349 800L339 982M455 787L480 982M556 787L622 982M557 787L624 982M633 740L676 818M634 740L678 818M348 800L338 982';
path(orange, '#c07848');
path(pink, '#cc8888');

// floor lines showing below the window
let stubs = '';
[[900, 1], [925, 1], [952, -1], [990, -1], [1010, -1], [1020, -1], [1040, 1], [1060, -1], [1148, 1], [1178, 1], [1260, 1], [1285, -1], [1292, -1], [1368, 1], [1476, 1], [1510, -1], [700, -1], [740, 1], [790, -1], [850, 1]].forEach(([x, s]) => {
    stubs += s > 0 ? `M${x} 970L${x + 10} 982` : `M${x} 982L${x + 32} 970`;
});
path(stubs, '#d08c64');

// force gizmo
path('M339 519L413 578 372 582 391 610 418 652', '#c468b8');

// pipe
const purple = '#5018b0';
let pipe = '';
[0, 1, 3, 6, 9, 12, 15, 18, 20, 23, 26, 28, 30, 31].forEach(o => {
    pipe += `M${606.5 + o} 47L${612.5 + o} 220`;
});
[0, 1, 3, 6, 9, 12].forEach(o => {
    pipe += `M${612.5 + o} 220V252`;
});
path(pipe, purple);
path('M594 182H648A12 12 0 0 1 651 206H594A12 12 0 0 1 594 182', '#c050d8');
path('M603 183H611V206H603zM640 183H646V206H640z', '#c050d8', 1, '#c050d8');
let bands = '';
for (let x = 612; x < 640; x += 3) bands += `M${x + 0.5} 182V206`;
path(bands, '#c050d8');
path('M587 194a6 6 0 1 0 12 0a6 6 0 1 0 -12 0M646 194a6 6 0 1 0 12 0a6 6 0 1 0 -12 0', '#184c8c', 1.5);

// elbow joint
path('M611 251H633V268L622 282 628 302Q613 296 613 276z', '#c050d8', 1, '#b048cc');
path('M613 256H630M613 260H630M614 264H629M615 269H626', '#3c1c48', 1);

// palms under the title bar
function frond(x0, y0, x1, y1, n, len) {
    let d = `M${x0} ${y0}L${x1} ${y1}`;
    const a = Math.atan2(y1 - y0, x1 - x0);
    for (let i = 0; i < n; i++) {
        const t = i / n, x = x0 + (x1 - x0) * t, y = y0 + (y1 - y0) * t;
        [-1, 1].forEach(s => {
            const b = a + s * (0.5 + rnd() * 0.7), l = len * (0.5 + rnd() * 0.5);
            d += `M${x.toFixed(1)} ${y.toFixed(1)}l${(Math.cos(b) * l).toFixed(1)} ${(Math.sin(b) * l).toFixed(1)}`;
        });
    }
    path(d, purple);
}
frond(1330, 45, 1440, 104, 70, 28);
frond(1345, 58, 1450, 110, 50, 26);
frond(1395, 44, 1480, 104, 70, 30);
frond(1470, 40, 1530, 108, 90, 38);
frond(1500, 38, 1570, 102, 80, 34);
frond(1560, 44, 1520, 104, 50, 40);
frond(1600, 54, 1520, 100, 50, 32);
frond(1185, 78, 1250, 112, 60, 22);
frond(1162, 82, 1220, 112, 20, 18);
path('M836 82L844 102M838 90L840 102M847 80L856 102M969 76L971 102M1281 47L1286 60M1285 47L1287 56M625 395L676 398M625 492L676 472M628 491L676 482M640 484L676 478', purple);
path('M1397 52L1370 102', '#5aa8e0');
out += '<rect x="1582" y="47" width="336" height="55" fill="#222"/>';

// hose
const lime = '#c0e04c';
tube([[339, 787, 13], [400, 776, 13], [457, 772, 12], [497, 778, 12], [517, 796, 12], [513, 820, 12], [485, 848, 13], [440, 876, 14], [395, 897, 15], [339, 920, 16]], lime, 6, 9);
tube([[612, 806, 8], [600, 813, 13], [577, 821, 14], [497, 836, 13], [397, 856, 15], [339, 873, 15]], lime, 8, 9);
tube([[658, 363, 10], [661, 420, 10], [661, 470, 10], [656, 540, 10], [650, 590, 10], [636, 635, 12], [612, 668, 12], [580, 698, 12], [554, 725, 12], [551, 748, 12], [567, 774, 13], [590, 793, 14], [606, 806, 12]], lime, 5, 9);
path('M594 792Q612 786 617 802T598 826', lime, 3);

// valve
path('M621 245L625 225Q630 215 643 215T663 224L668 245 660 246 661 268Q670 280 674 305L674 332 670 340 669 363H649L646 335 637 330 641 322V304H634Q619 298 619 284T632 268L631 246z', '#90e458', 1, '#90e458');
path('M637 322V332L648 336M674 322V334L664 336', '#90e458', 2);
path('M643 247v5M646 252v6M643 257v4M641 279v2M644 281v3M642 285v2M646 287v3M640 288v2M648 283v3M650 325v6M654 324v8M658 325v7M662 324v8M666 326v6M655 308v2M664 305v2M648 336v7M658 350v10', '#2c4420');

// pots
function dome(x, y, w, h) {
    let d = `M${x} ${y}`;
    for (let i = 0; i <= 5; i++) {
        d += `M${x} ${y}Q${x + w * 0.3} ${y - h * (1.6 - i * 0.3)} ${x + w} ${y + h * 0.4 - i * h * 0.1}`;
    }
    for (let i = 1; i < 8; i++) {
        const px = x + w * i / 8;
        d += `M${px} ${y + h * 0.3 * i / 8}Q${px + w * 0.03} ${y - h * 0.5} ${px - w * 0.1} ${y - h * 0.9 * Math.sin(Math.PI * i / 9)}`;
    }
    path(d, '#f4f4f4');
}
dome(401, 966, 70, 22);
dome(379, 981, 60, 10);
dome(561, 952, 52, 14);
dome(504, 867, 16, 5);
dome(345, 916, 62, 12);
dome(505, 826, 46, 10);
dome(365, 868, 26, 6);
dome(664, 893, 20, 14);
path('M380 922L384 930 380 929M395 920L403 928 407 916M511 868V871', '#f4f4f4');

out += '<rect x="2" y="47" width="337" height="935" fill="#222"/>';
path('M339 980.5H1582.5M1582.5 47V102M1582.5 970V981', '#b8a838');

wire.innerHTML = out;
```
